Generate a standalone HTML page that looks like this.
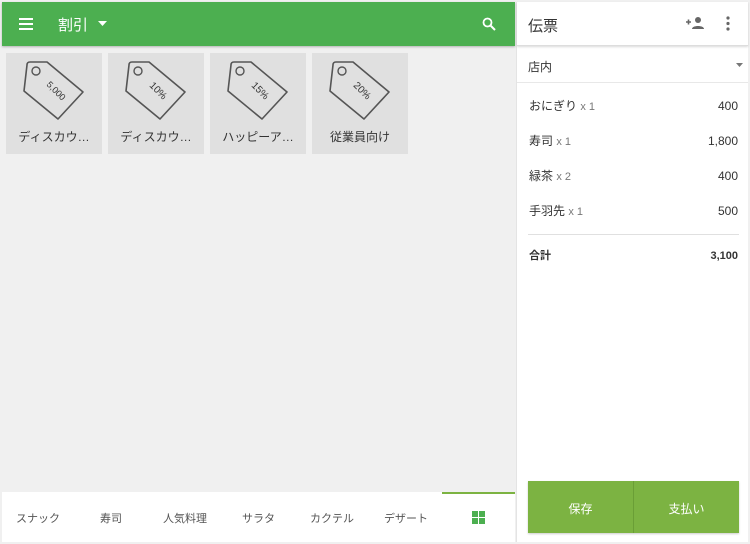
<!DOCTYPE html>
<html><head><meta charset="utf-8"><style>
*{margin:0;padding:0;box-sizing:border-box}
body{width:750px;height:544px;background:#f0f0f0;font-family:"Liberation Sans","Noto Sans CJK JP",sans-serif;position:relative;overflow:hidden;color:#333}
.abs{position:absolute}
.hdr{left:2px;top:2px;width:513px;height:44px;background:#4caf50;box-shadow:0 1px 2px rgba(0,0,0,.25)}
.tile{position:absolute;top:53px;width:96px;height:101px;background:#e0e0e0}
.tile .lbl{position:absolute;left:0;right:0;top:75px;text-align:center;font-size:12px;color:#333}
.rp{left:516px;top:2px;width:232px;height:540px;background:#fff;border-left:1px solid #e4e4e4}
.row{position:absolute;left:12px;right:10px;font-size:12px;color:#333;line-height:16px;height:16px}
.row .q{color:#777;font-size:11px}
.row .v{position:absolute;right:0;top:0;line-height:16px}
.tabs{left:2px;top:492px;width:513px;height:50px;background:#fff}
.tab{position:absolute;top:18px;font-size:11px;color:#555}
</style></head><body>
<div class="abs hdr">
  <svg class="abs" style="left:17px;top:16px" width="14" height="12"><rect y="0" width="14" height="2" fill="#fff"/><rect y="5" width="14" height="2" fill="#fff"/><rect y="10" width="14" height="2" fill="#fff"/></svg>
  <div class="abs" style="left:56px;top:12px;color:#fff;font-size:15px">割引</div>
  <svg class="abs" style="left:96px;top:19px" width="9" height="5"><path d="M0 0h9L4.5 5z" fill="#fff"/></svg>
  <svg class="abs" style="left:480px;top:15px" width="14" height="14" viewBox="0 0 14 14"><circle cx="5.5" cy="5.5" r="4" fill="none" stroke="#fff" stroke-width="1.8"/><path d="M8.5 8.5L13 13" stroke="#fff" stroke-width="2"/></svg>
</div>
<div class="tile" style="left:6px"><svg class="abs" style="left:0;top:0" width="96" height="75"><path d="M21 12q0-3 3-3h17l36 30-25 27-34-28z" fill="none" stroke="#555" stroke-width="1.6" stroke-linejoin="round"/><circle cx="30" cy="18" r="4" fill="none" stroke="#555" stroke-width="1.4"/><text x="48" y="40" font-size="9" fill="#333" transform="rotate(45 48 40)" text-anchor="middle" font-family="Liberation Sans">5,000</text></svg><div class="lbl">ディスカウ…</div></div>
<div class="tile" style="left:108px"><svg class="abs" style="left:0;top:0" width="96" height="75"><path d="M21 12q0-3 3-3h17l36 30-25 27-34-28z" fill="none" stroke="#555" stroke-width="1.6" stroke-linejoin="round"/><circle cx="30" cy="18" r="4" fill="none" stroke="#555" stroke-width="1.4"/><text x="48" y="40" font-size="10" fill="#333" transform="rotate(45 48 40)" text-anchor="middle" font-family="Liberation Sans">10%</text></svg><div class="lbl">ディスカウ…</div></div>
<div class="tile" style="left:210px"><svg class="abs" style="left:0;top:0" width="96" height="75"><path d="M21 12q0-3 3-3h17l36 30-25 27-34-28z" fill="none" stroke="#555" stroke-width="1.6" stroke-linejoin="round"/><circle cx="30" cy="18" r="4" fill="none" stroke="#555" stroke-width="1.4"/><text x="48" y="40" font-size="10" fill="#333" transform="rotate(45 48 40)" text-anchor="middle" font-family="Liberation Sans">15%</text></svg><div class="lbl">ハッピーア…</div></div>
<div class="tile" style="left:312px"><svg class="abs" style="left:0;top:0" width="96" height="75"><path d="M21 12q0-3 3-3h17l36 30-25 27-34-28z" fill="none" stroke="#555" stroke-width="1.6" stroke-linejoin="round"/><circle cx="30" cy="18" r="4" fill="none" stroke="#555" stroke-width="1.4"/><text x="48" y="40" font-size="10" fill="#333" transform="rotate(45 48 40)" text-anchor="middle" font-family="Liberation Sans">20%</text></svg><div class="lbl">従業員向け</div></div>

<div class="abs tabs">
  <div class="abs" style="left:440px;top:0;width:73px;height:2px;background:#7cb342"></div>
  <div class="tab" style="left:14px">スナック</div>
  <div class="tab" style="left:98px">寿司</div>
  <div class="tab" style="left:161px">人気料理</div>
  <div class="tab" style="left:240px">サラタ</div>
  <div class="tab" style="left:308px">カクテル</div>
  <div class="tab" style="left:382px">デザート</div>
  <svg class="abs" style="left:470px;top:19px" width="13" height="13"><rect width="6" height="6" fill="#4caf50"/><rect x="7" width="6" height="6" fill="#4caf50"/><rect y="7" width="6" height="6" fill="#4caf50"/><rect x="7" y="7" width="6" height="6" fill="#4caf50"/></svg>
</div>

<div class="abs rp">
  <div class="abs" style="left:0;top:0;width:231px;height:44px;border-bottom:1px solid #ddd;box-shadow:0 1px 2px rgba(0,0,0,.15)">
    <div class="abs" style="left:11px;top:13px;font-size:15px;color:#333">伝票</div>
    <svg class="abs" style="left:169px;top:15px" width="18" height="12"><path d="M0 5h5M2.5 2.5v5" stroke="#666" stroke-width="1.6"/><circle cx="12" cy="3" r="3" fill="#666"/><path d="M6 12c0-4 12-4 12 0z" fill="#666"/></svg>
    <svg class="abs" style="left:209px;top:14px" width="4" height="15"><circle cx="2" cy="2" r="1.6" fill="#666"/><circle cx="2" cy="7.5" r="1.6" fill="#666"/><circle cx="2" cy="13" r="1.6" fill="#666"/></svg>
  </div>
  <div class="abs" style="left:11px;top:56px;font-size:12px">店内</div>
  <svg class="abs" style="left:219px;top:61px" width="7" height="4"><path d="M0 0h7L3.5 4z" fill="#777"/></svg>
  <div class="abs" style="left:0;top:80px;width:231px;height:1px;background:#e8e8e8"></div>
  <div class="row" style="top:96px">おにぎり <span class="q">x 1</span><span class="v">400</span></div>
  <div class="row" style="top:131px">寿司 <span class="q">x 1</span><span class="v">1,800</span></div>
  <div class="row" style="top:166px">緑茶 <span class="q">x 2</span><span class="v">400</span></div>
  <div class="row" style="top:201px">手羽先 <span class="q">x 1</span><span class="v">500</span></div>
  <div class="abs" style="left:11px;top:232px;width:211px;height:1px;background:#e0e0e0"></div>
  <div class="row" style="top:246px;font-weight:bold;font-size:11px">合計<span class="v">3,100</span></div>
  <div class="abs" style="left:11px;top:479px;width:211px;height:52px;background:#7cb342;box-shadow:0 1px 2px rgba(0,0,0,.2)">
    <div class="abs" style="left:105px;top:0;width:1px;height:52px;background:#6a9e36"></div>
    <div class="abs" style="left:0;width:105px;top:19px;text-align:center;color:#fff;font-size:12px">保存</div>
    <div class="abs" style="left:106px;width:105px;top:19px;text-align:center;color:#fff;font-size:12px">支払い</div>
  </div>
</div>
</body></html>
